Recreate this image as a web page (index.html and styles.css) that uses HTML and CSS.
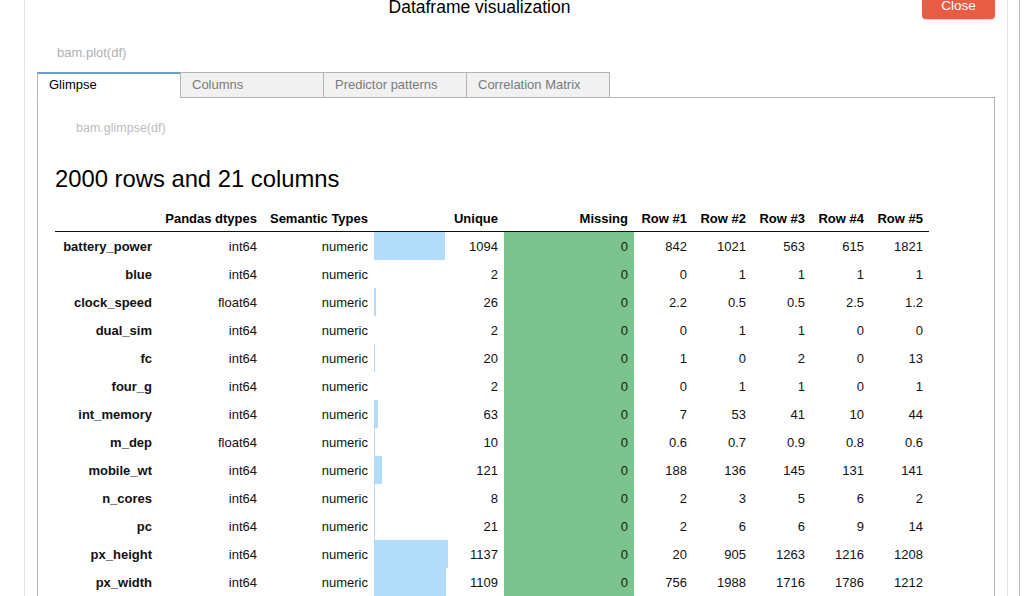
FILE: index.html
```html
<!DOCTYPE html>
<html lang="en">
<head>
<meta charset="utf-8">
<title>Dataframe visualization</title>
<link rel="stylesheet" href="styles.css">
</head>
<body>
<div class="page">
  <div class="modal">
    <div class="modal-header">
      <div class="modal-title">Dataframe visualization</div>
      <button class="close-btn">Close</button>
    </div>
    <div class="code-label">bam.plot(df)</div>
    <div class="tabs">
      <div class="tab active">Glimpse</div>
      <div class="tab">Columns</div>
      <div class="tab">Predictor patterns</div>
      <div class="tab">Correlation Matrix</div>
    </div>
    <div class="panel">
      <div class="code-label inner">bam.glimpse(df)</div>
      <h2 class="summary">2000 rows and 21 columns</h2>
      <table class="glimpse">
        <colgroup>
          <col class="c-idx"><col class="c-dtype"><col class="c-sem"><col class="c-uniq"><col class="c-miss">
          <col class="c-row"><col class="c-row"><col class="c-row"><col class="c-row"><col class="c-row">
        </colgroup>
        <thead>
          <tr><th></th><th>Pandas dtypes</th><th>Semantic Types</th><th>Unique</th><th>Missing</th><th>Row #1</th><th>Row #2</th><th>Row #3</th><th>Row #4</th><th>Row #5</th></tr>
        </thead>
        <tbody>
          <tr><th>battery_power</th><td>int64</td><td>numeric</td><td class="uniq" style="--w:54.7%">1094</td><td class="miss">0</td><td>842</td><td>1021</td><td>563</td><td>615</td><td>1821</td></tr>
          <tr><th>blue</th><td>int64</td><td>numeric</td><td class="uniq" style="--w:0.1%">2</td><td class="miss">0</td><td>0</td><td>1</td><td>1</td><td>1</td><td>1</td></tr>
          <tr><th>clock_speed</th><td>float64</td><td>numeric</td><td class="uniq" style="--w:1.3%">26</td><td class="miss">0</td><td>2.2</td><td>0.5</td><td>0.5</td><td>2.5</td><td>1.2</td></tr>
          <tr><th>dual_sim</th><td>int64</td><td>numeric</td><td class="uniq" style="--w:0.1%">2</td><td class="miss">0</td><td>0</td><td>1</td><td>1</td><td>0</td><td>0</td></tr>
          <tr><th>fc</th><td>int64</td><td>numeric</td><td class="uniq" style="--w:1%">20</td><td class="miss">0</td><td>1</td><td>0</td><td>2</td><td>0</td><td>13</td></tr>
          <tr><th>four_g</th><td>int64</td><td>numeric</td><td class="uniq" style="--w:0.1%">2</td><td class="miss">0</td><td>0</td><td>1</td><td>1</td><td>0</td><td>1</td></tr>
          <tr><th>int_memory</th><td>int64</td><td>numeric</td><td class="uniq" style="--w:3.15%">63</td><td class="miss">0</td><td>7</td><td>53</td><td>41</td><td>10</td><td>44</td></tr>
          <tr><th>m_dep</th><td>float64</td><td>numeric</td><td class="uniq" style="--w:0.5%">10</td><td class="miss">0</td><td>0.6</td><td>0.7</td><td>0.9</td><td>0.8</td><td>0.6</td></tr>
          <tr><th>mobile_wt</th><td>int64</td><td>numeric</td><td class="uniq" style="--w:6.05%">121</td><td class="miss">0</td><td>188</td><td>136</td><td>145</td><td>131</td><td>141</td></tr>
          <tr><th>n_cores</th><td>int64</td><td>numeric</td><td class="uniq" style="--w:0.4%">8</td><td class="miss">0</td><td>2</td><td>3</td><td>5</td><td>6</td><td>2</td></tr>
          <tr><th>pc</th><td>int64</td><td>numeric</td><td class="uniq" style="--w:1.05%">21</td><td class="miss">0</td><td>2</td><td>6</td><td>6</td><td>9</td><td>14</td></tr>
          <tr><th>px_height</th><td>int64</td><td>numeric</td><td class="uniq" style="--w:56.85%">1137</td><td class="miss">0</td><td>20</td><td>905</td><td>1263</td><td>1216</td><td>1208</td></tr>
          <tr><th>px_width</th><td>int64</td><td>numeric</td><td class="uniq" style="--w:55.45%">1109</td><td class="miss">0</td><td>756</td><td>1988</td><td>1716</td><td>1786</td><td>1212</td></tr>
          <tr><th>ram</th><td>int64</td><td>numeric</td><td class="uniq" style="--w:78.1%">1562</td><td class="miss">0</td><td>2549</td><td>2631</td><td>2603</td><td>2769</td><td>1411</td></tr>
          <tr><th>sc_h</th><td>int64</td><td>numeric</td><td class="uniq" style="--w:0.75%">15</td><td class="miss">0</td><td>9</td><td>17</td><td>11</td><td>16</td><td>8</td></tr>
          <tr><th>sc_w</th><td>int64</td><td>numeric</td><td class="uniq" style="--w:0.95%">19</td><td class="miss">0</td><td>7</td><td>3</td><td>2</td><td>8</td><td>2</td></tr>
        </tbody>
      </table>
    </div>
  </div>
  <div class="side-edge"></div>
</div>
</body>
</html>
```

FILE: styles.css
```css
html, body {
  margin: 0;
  padding: 0;
  height: 596px;
  overflow: hidden;
  background: #ffffff;
}

body {
  font-family: "Liberation Sans", Arial, Helvetica, sans-serif;
  font-size: 13px;
  color: #111;
}

.page {
  display: flex;
  align-items: stretch;
  height: 100%;
}

.modal {
  margin-left: 24px;
  width: 984px;
  box-sizing: border-box;
  border-left: 1px solid #e2e2e2;
  border-right: 1px solid #e2e2e2;
  padding: 0 12px;
  display: flex;
  flex-direction: column;
  min-height: 0;
}

.side-edge {
  margin-left: 11px;
  border-left: 1px solid #bdbdbd;
  width: 0;
}

.modal-header {
  display: flex;
  align-items: flex-start;
  margin-top: -11px;
  height: 30px;
}

.modal-title {
  flex: 1;
  text-align: center;
  font-size: 17.5px;
  line-height: 24px;
  margin-top: 6px;
  color: #000;
}

.close-btn {
  width: 73px;
  height: 30px;
  box-sizing: border-box;
  padding: 3px 0 0;
  border: none;
  border-radius: 4px;
  background: #e85b44;
  color: #fff;
  font-family: inherit;
  font-size: 13.5px;
  line-height: 27px;
  box-shadow: 0 1px 1px rgba(0, 0, 0, 0.15);
}

.code-label {
  font-size: 13px;
  line-height: 16px;
  color: #b0b0b0;
  margin: 26px 0 0 20px;
}

.code-label.inner {
  font-size: 12.5px;
  color: #bdbdbd;
  margin: 22px 0 0 21px;
}

.tabs {
  display: flex;
  margin-top: 11px;
  position: relative;
  z-index: 1;
}

.tab {
  box-sizing: border-box;
  width: 144px;
  height: 26px;
  margin-bottom: -1px;
  padding-left: 11px;
  border: 1px solid #b4b4b4;
  background: #f1f1f1;
  color: #7a7a7a;
  font-size: 13px;
  line-height: 23px;
}

.tab + .tab {
  margin-left: -1px;
}

.tab.active {
  background: #fff;
  color: #000;
  border-top: 2px solid #6e9dc6;
  border-bottom-color: #fff;
  line-height: 22px;
}

.panel {
  flex: 1;
  border: 1px solid #b4b4b4;
  border-bottom: none;
  padding: 0 17px;
  overflow: hidden;
}

.summary {
  margin: 29px 0 0 0;
  font-size: 23.8px;
  line-height: 28px;
  font-weight: normal;
  color: #000;
}

.glimpse {
  margin-top: 12px;
  border-collapse: collapse;
  table-layout: fixed;
  width: 874px;
}

.c-idx { width: 103px; }
.c-dtype { width: 105px; }
.c-sem { width: 111px; }
.c-uniq { width: 130px; }
.c-miss { width: 130px; }
.c-row { width: 59px; }

.glimpse th,
.glimpse td {
  padding: 0 6px 0 0;
  text-align: right;
  white-space: nowrap;
  vertical-align: middle;
}

.glimpse thead th {
  height: 26px;
  font-weight: bold;
  color: #000;
  border-bottom: 1px solid #111;
}

.glimpse tbody th,
.glimpse tbody td {
  height: 28px;
}

.glimpse tbody th {
  font-weight: bold;
  color: #111;
}

.glimpse td.uniq {
  background: linear-gradient(90deg, #b3dbfa var(--w), transparent var(--w));
}

.glimpse td.miss {
  background: #7bc48f;
  color: #0f1f10;
}
```
